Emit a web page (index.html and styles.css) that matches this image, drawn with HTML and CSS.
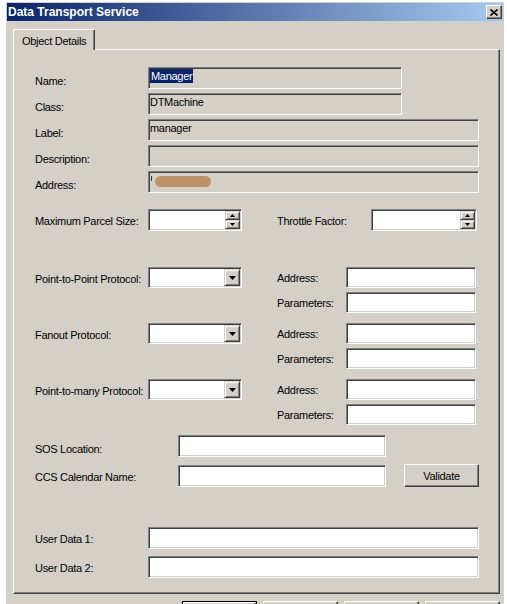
FILE: index.html
```html
<html>
<head>
<link rel="stylesheet" href="styles.css">
</head>
<body>

<div class="window">
  <div class="titlebar">
    <span class="title">Data Transport Service</span>
    <span class="close">
      <svg width="8" height="7" viewBox="0 0 8 7"><path d="M0.5 0.5 L7.5 6.5 M7.5 0.5 L0.5 6.5" stroke="#000" stroke-width="1.6" fill="none"/></svg>
    </span>
  </div>

  <div class="body">
    <div class="tabs">
      <div class="tab">Object Details</div>
    </div>

    <div class="panel">

      <div class="sec1">
        <div class="row"><span class="lbl">Name:</span><div class="field ro w254"><span class="sel">Manager</span></div></div>
        <div class="row"><span class="lbl">Class:</span><div class="field ro w254">DTMachine</div></div>
        <div class="row"><span class="lbl">Label:</span><div class="field ro w331">manager</div></div>
        <div class="row"><span class="lbl">Description:</span><div class="field ro w331"></div></div>
        <div class="row"><span class="lbl">Address:</span><div class="field ro w331"><span class="tick"></span><span class="blob"></span></div></div>
      </div>

      <div class="row spinrow">
        <span class="lbl">Maximum Parcel Size:</span>
        <div class="field spin w94">
          <div class="spinbtns">
            <span class="sbtn"><svg width="5" height="3" viewBox="0 0 5 3"><polygon points="2.5,0 5,3 0,3" fill="#000"/></svg></span>
            <span class="sbtn"><svg width="5" height="3" viewBox="0 0 5 3"><polygon points="0,0 5,0 2.5,3" fill="#000"/></svg></span>
          </div>
        </div>
        <span class="lbl lbl-tf">Throttle Factor:</span>
        <div class="field spin w106">
          <div class="spinbtns">
            <span class="sbtn"><svg width="5" height="3" viewBox="0 0 5 3"><polygon points="2.5,0 5,3 0,3" fill="#000"/></svg></span>
            <span class="sbtn"><svg width="5" height="3" viewBox="0 0 5 3"><polygon points="0,0 5,0 2.5,3" fill="#000"/></svg></span>
          </div>
        </div>
      </div>

      <div class="grp first">
        <div class="row"><span class="lbl">Point-to-Point Protocol:</span>
          <div class="field combo w94"><span class="dd"><svg width="7" height="4" viewBox="0 0 7 4"><polygon points="0,0 7,0 3.5,4" fill="#000"/></svg></span></div>
        </div>
        <div class="side">
          <div class="row"><span class="lbl2">Address:</span><div class="field w130 h21"></div></div>
          <div class="row"><span class="lbl2">Parameters:</span><div class="field w130 h21"></div></div>
        </div>
      </div>

      <div class="grp">
        <div class="row"><span class="lbl">Fanout Protocol:</span>
          <div class="field combo w94"><span class="dd"><svg width="7" height="4" viewBox="0 0 7 4"><polygon points="0,0 7,0 3.5,4" fill="#000"/></svg></span></div>
        </div>
        <div class="side">
          <div class="row"><span class="lbl2">Address:</span><div class="field w130 h21"></div></div>
          <div class="row"><span class="lbl2">Parameters:</span><div class="field w130 h21"></div></div>
        </div>
      </div>

      <div class="grp">
        <div class="row"><span class="lbl">Point-to-many Protocol:</span>
          <div class="field combo w94"><span class="dd"><svg width="7" height="4" viewBox="0 0 7 4"><polygon points="0,0 7,0 3.5,4" fill="#000"/></svg></span></div>
        </div>
        <div class="side">
          <div class="row"><span class="lbl2">Address:</span><div class="field w130 h21"></div></div>
          <div class="row"><span class="lbl2">Parameters:</span><div class="field w130 h21"></div></div>
        </div>
      </div>

      <div class="row sos"><span class="lbl lbl-wide low">SOS Location:</span><div class="field w208"></div></div>
      <div class="row ccs"><span class="lbl lbl-wide">CCS Calendar Name:</span><div class="field w208"></div><span class="btn validate">Validate</span></div>

      <div class="row ud1"><span class="lbl">User Data 1:</span><div class="field w331"></div></div>
      <div class="row ud2"><span class="lbl">User Data 2:</span><div class="field w331"></div></div>

    </div>

    <!-- dialog buttons, only their top edge is in view -->
    <div class="buttons">
      <span class="btn default"></span>
      <span class="btn"></span>
      <span class="btn"></span>
      <span class="btn"></span>
    </div>
  </div>
</div>

</body>
</html>
```

FILE: styles.css
```css
* {
  box-sizing: border-box;
}

body {
  margin: 0;
  background: #fff;
  font-family: "Liberation Sans", Arial, sans-serif;
  font-size: 11px;
  letter-spacing: -0.3px;
  color: #000;
  overflow: hidden;
}

.window {
  margin: 2px 0 0 6px;
  width: 498px;
  height: 620px;
  background: #d4d0c8;
  border-top: 1px solid #d4d0c8;
  border-left: 1px solid #d4d0c8;
  padding-right: 1px;
}

.titlebar {
  height: 18px;
  display: flex;
  align-items: center;
  justify-content: space-between;
  padding: 0 1px 0 1px;
  background: linear-gradient(to right, #0a246a, #a6caf0);
  color: #fff;
}

.title {
  font-weight: bold;
  font-size: 12px;
  letter-spacing: 0;
}

.close {
  width: 16px;
  height: 14px;
  display: flex;
  align-items: center;
  justify-content: center;
  background: #d4d0c8;
  border: 1px solid;
  border-color: #fff #404040 #404040 #fff;
  box-shadow: inset -1px -1px #808080;
}

.body {
  padding: 8px 0 0 6px;
}

.tabs {
  display: flex;
  height: 20px;
}

.tab {
  position: relative;
  z-index: 1;
  width: 82px;
  height: 21px;
  padding: 4px 0 0 8px;
  line-height: 14px;
  background: #d4d0c8;
  border-top: 1px solid #fff;
  border-left: 1px solid #fff;
  border-right: 1px solid #404040;
  border-radius: 2px 2px 0 0;
  box-shadow: inset -1px 0 #808080;
}

.panel {
  width: 487px;
  height: 545px;
  border: 1px solid;
  border-color: #fff #404040 #404040 #fff;
  box-shadow: inset -1px -1px #808080;
  padding-left: 21px;
}

.row {
  display: flex;
  align-items: center;
}

.lbl {
  width: 113px;
  flex: none;
  padding-top: 2px;
  white-space: nowrap;
}

.sec1 {
  margin-top: 17px;
  display: flex;
  flex-direction: column;
  gap: 4px;
}

.sec1 .lbl,
.lbl.low {
  padding-top: 5px;
}

.lbl-wide {
  width: 143px;
}

.lbl-tf {
  width: 94px;
  margin-left: 35px;
}

.lbl2 {
  width: 69px;
  flex: none;
  white-space: nowrap;
}

/* sunken edit box */
.field {
  flex: none;
  height: 22px;
  padding: 1px;
  line-height: 14px;
  background: #fff;
  border: 1px solid;
  border-color: #808080 #fff #fff #808080;
  box-shadow: inset 1px 1px #404040, inset -1px -1px #d4d0c8;
  white-space: nowrap;
  overflow: hidden;
}

.field.ro {
  background: #d4d0c8;
}

.h21 { height: 21px; }
.w94 { width: 94px; }
.w106 { width: 106px; }
.w130 { width: 130px; }
.w208 { width: 208px; }
.w254 { width: 254px; }
.w331 { width: 331px; }

.sel {
  display: inline-block;
  padding: 0 1px;
  line-height: 14px;
  background: #0a246a;
  color: #fff;
}

.tick {
  display: inline-block;
  vertical-align: top;
  width: 1px;
  height: 5px;
  margin: 3px 0 0 1px;
  background: #333;
}

.blob {
  display: inline-block;
  vertical-align: top;
  width: 56px;
  height: 11px;
  margin: 3px 0 0 3px;
  border-radius: 6px;
  background: #bd926a;
}

.spinrow {
  margin-top: 16px;
}

.spin {
  display: flex;
  justify-content: flex-end;
}

.spinbtns {
  width: 15px;
  display: flex;
  flex-direction: column;
}

.sbtn,
.dd {
  display: flex;
  align-items: center;
  justify-content: center;
  background: #d4d0c8;
  border: 1px solid;
  border-color: #d4d0c8 #404040 #404040 #d4d0c8;
  box-shadow: inset 1px 1px #fff, inset -1px -1px #808080;
}

.sbtn {
  height: 9px;
}

.combo {
  height: 21px;
  display: flex;
  justify-content: flex-end;
}

.dd {
  width: 16px;
  height: 17px;
}

.grp {
  display: flex;
  align-items: flex-start;
  margin-top: 10px;
}

.grp.first {
  margin-top: 36px;
}

.side {
  margin-left: 35px;
  display: flex;
  flex-direction: column;
  gap: 4px;
}

.sos {
  margin-top: 10px;
}

.ccs {
  margin-top: 8px;
}

/* raised push button */
.btn {
  display: flex;
  align-items: center;
  justify-content: center;
  flex: none;
  width: 75px;
  height: 23px;
  background: #d4d0c8;
  border: 1px solid;
  border-color: #fff #404040 #404040 #fff;
  box-shadow: inset -1px -1px #808080;
}

.validate {
  margin: -1px 0 0 18px;
}

.ud1 {
  margin-top: 40px;
}

.ud2 {
  margin-top: 7px;
}

.buttons {
  width: 487px;
  margin-top: 7px;
  display: flex;
  justify-content: flex-end;
  gap: 6px;
}

.btn.default {
  border-color: #000;
  box-shadow: inset 1px 1px #fff, inset -1px -1px #404040, inset -2px -2px #808080;
}
```
